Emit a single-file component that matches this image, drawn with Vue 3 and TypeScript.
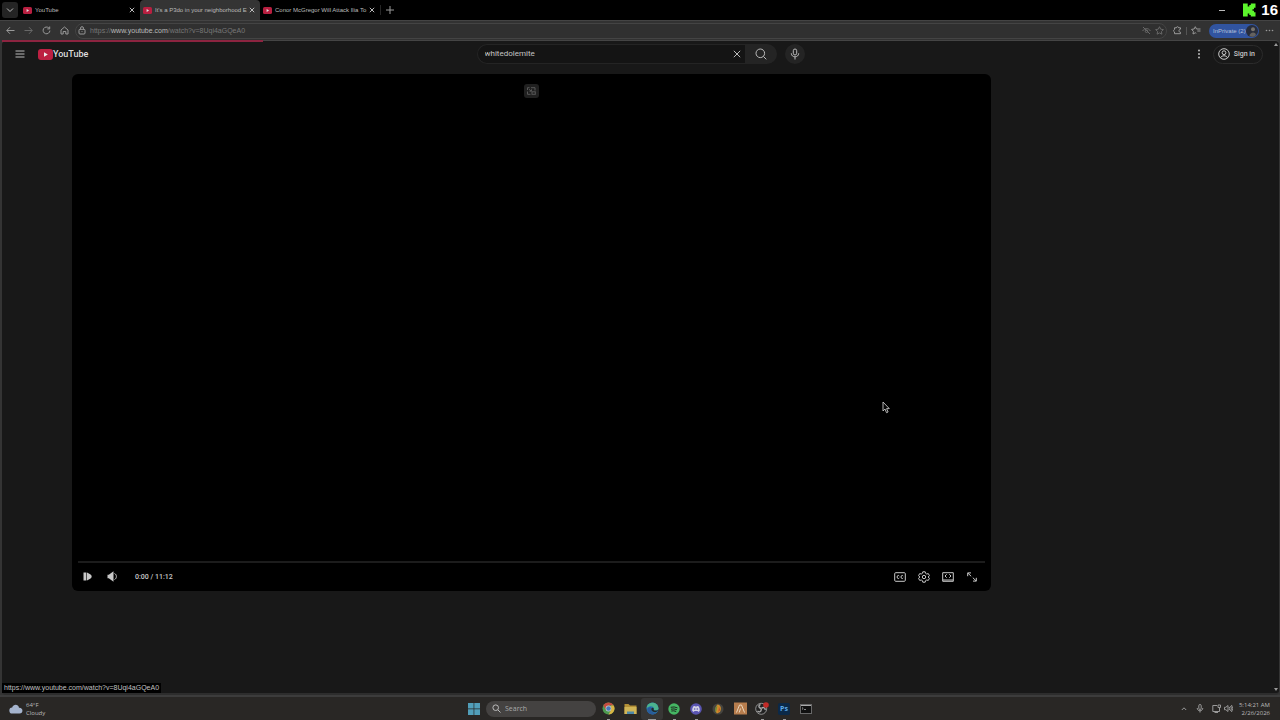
<script setup lang="ts">
import { ref } from 'vue'

interface Tab {
  id: number
  title: string
  active: boolean
}

const tabs: Tab[] = [
  { id: 1, title: 'YouTube', active: false },
  { id: 2, title: "It's a P3do in your neighborhood E", active: true },
  { id: 3, title: 'Conor McGregor Will Attack Ilia To', active: false },
]

const query = ref('whitedolemite')
const loaded = 20.4
</script>

<template>
  <div class="desktop">
    <header class="tabstrip">
      <button class="tab-menu" aria-label="Tab actions">
        <svg width="8" height="8" viewBox="0 0 8 8"><path d="M1 2.5 4 5.5 7 2.5" /></svg>
      </button>
      <div v-for="tab in tabs" :key="tab.id" class="tab" :class="{ active: tab.active }">
        <svg class="favicon" width="9" height="7" viewBox="0 0 9 7">
          <rect width="9" height="7" rx="1.6" fill="#b81f40" />
          <path d="M3.6 2v3L6.1 3.5z" fill="#ddd" />
        </svg>
        <span class="tab-title">{{ tab.title }}</span>
        <button class="close" aria-label="Close tab">
          <svg width="6" height="6" viewBox="0 0 6 6"><path d="M.8.8 5.2 5.2M5.2.8.8 5.2" /></svg>
        </button>
      </div>
      <button class="new-tab" aria-label="New tab">
        <svg width="8" height="8" viewBox="0 0 8 8"><path d="M4 0v8M0 4h8" /></svg>
      </button>
      <button class="minimize" aria-label="Minimize">
        <svg width="6" height="6" viewBox="0 0 6 6"><path d="M0 3.5h6" /></svg>
      </button>
      <div class="recorder">
        <svg width="14" height="14" viewBox="0 0 14 14">
          <path d="M1 .5h4.7v3h1.6V2h1.5V.5h4.7v4.2H12v1.5h-1.5v1.6H12v1.5h1.5v4.2H8.8V12H7.3v-1.5H5.7v3H1z" fill="#5cf52c" />
        </svg>
        <span>16</span>
      </div>
    </header>

    <nav class="toolbar">
      <button aria-label="Back"><svg width="9" height="9" viewBox="0 0 9 9"><path d="M8.5 4.5H.8M4 1.2.8 4.5 4 7.8" /></svg></button>
      <button class="dim" aria-label="Forward"><svg width="9" height="9" viewBox="0 0 9 9"><path d="M.5 4.5h7.7M5 1.2l3.2 3.3L5 7.8" /></svg></button>
      <button aria-label="Refresh"><svg width="9" height="9" viewBox="0 0 9 9"><path d="M7.9 4.6A3.4 3.4 0 1 1 6.9 2M7.7.5v2.4H5.3" /></svg></button>
      <button aria-label="Home"><svg width="9" height="9" viewBox="0 0 9 9"><path d="M1 4 4.5 1 8 4v4H5.8V5.5H3.2V8H1z" /></svg></button>
      <div class="address">
        <svg width="8" height="9" viewBox="0 0 8 9"><rect x="1" y="3.3" width="6" height="4.7" rx="1" /><path d="M2.5 3.3V2.2a1.5 1.5 0 0 1 3 0v1.1M4 5.2v.8" /></svg>
        <span class="url">https://<b>www.youtube.com</b>/watch?v=8Uqi4aGQeA0</span>
        <button class="dim" aria-label="Tracking prevention"><svg width="9" height="9" viewBox="0 0 9 9"><path d="M.6 5C2.4 1.7 6.6 1.7 8.4 5M1 1l7 7" /><circle cx="4.5" cy="5.2" r="1.3" /></svg></button>
        <button class="dim" aria-label="Add to favorites"><svg width="9" height="9" viewBox="0 0 9 9"><path d="m4.5.7 1.2 2.5 2.7.4-2 1.9.5 2.7-2.4-1.3-2.4 1.3.5-2.7-2-1.9 2.7-.4z" /></svg></button>
      </div>
      <button class="ext" aria-label="Extensions"><svg width="9" height="9" viewBox="0 0 9 9"><path d="M7.5 3V1.8H5.7C5.5.3 3.5.3 3.3 1.8H1.5v1.7C.3 4 .3 5.5 1.5 6v1.7h6V6.3C5.5 6.5 5.5 3 7.5 3.3" /></svg></button>
      <i class="bar"></i>
      <button class="fav" aria-label="Favorites"><svg width="10" height="9" viewBox="0 0 10 9"><path d="M6 3.2 5.5 3 4.3.7 3.1 3l-2.6.4 1.9 1.9L2 8l2.3-1.2 1 .5M6 3h3.5M6.3 5h3.2" /></svg></button>
      <button class="profile">
        <span>InPrivate (2)</span>
        <svg width="12" height="12" viewBox="0 0 12 12"><circle cx="6" cy="6" r="6" fill="#282d3b" /><circle cx="7" cy="4.2" r="2" fill="#77736d" /><path d="M3.5 11c0-4 6-5 6.5-1-1 1.7-4.5 2.5-6.5 1z" fill="#65625f" /></svg>
      </button>
      <button class="more" aria-label="Settings and more"><svg width="9" height="3" viewBox="0 0 9 3"><g class="solid"><circle cx="1.5" cy="1.5" r=".8" /><circle cx="4.5" cy="1.5" r=".8" /><circle cx="7.5" cy="1.5" r=".8" /></g></svg></button>
    </nav>

    <div class="window">
      <div class="progress" :style="{ width: loaded + '%' }"></div>
      <div class="masthead">
        <div class="start">
          <button class="guide" aria-label="Guide"><svg width="10" height="8" viewBox="0 0 10 8"><path d="M.5 1h9M.5 4h9M.5 7h9" /></svg></button>
          <a class="logo" href="#" aria-label="YouTube Home">
            <svg width="15" height="11" viewBox="0 0 15 11"><rect width="15" height="11" rx="3" fill="#bd2042" /><path d="M6 3.3v4.4L9.8 5.5z" fill="#eee" /></svg>
            <span>YouTube</span>
          </a>
        </div>
        <form class="search" role="search" @submit.prevent>
          <div class="field">
            <input v-model="query" type="text" aria-label="Search" />
            <button type="button" aria-label="Clear" @click="query = ''"><svg width="8" height="8" viewBox="0 0 8 8"><path d="M.8.8 7.2 7.2M7.2.8.8 7.2" /></svg></button>
          </div>
          <button class="go" aria-label="Submit search"><svg width="12" height="12" viewBox="0 0 12 12"><circle cx="5.3" cy="5.3" r="4.3" /><path d="m8.4 8.4 2.9 2.9" /></svg></button>
          <button class="mic" type="button" aria-label="Search with your voice"><svg width="10" height="12" viewBox="0 0 10 12"><rect x="3.3" y="1" width="3.4" height="6" rx="1.7" /><path d="M1.3 5.3c0 4.7 7.4 4.7 7.4 0M5 9v2.5" /></svg></button>
        </form>
        <div class="end">
          <button aria-label="Settings"><svg width="4" height="10" viewBox="0 0 4 10"><g class="solid"><circle cx="2" cy="1.5" r="1" /><circle cx="2" cy="5" r="1" /><circle cx="2" cy="8.5" r="1" /></g></svg></button>
          <a class="signin" href="#">
            <svg width="12" height="12" viewBox="0 0 12 12"><circle cx="6" cy="6" r="5.3" /><circle cx="6" cy="4.7" r="1.9" /><path d="M2.5 9.8c1-2.7 6-2.7 7 0" /></svg>
            <span>Sign in</span>
          </a>
        </div>
      </div>

      <main class="content">
        <section class="player" aria-label="Video player">
          <div class="badge">
            <svg width="9" height="8" viewBox="0 0 9 8"><path d="M.5 3V.7h2M4 .7h4v2.8M.5 4.5v2.8h3M2 2.2 4 4M4.5 2.3V4.2H2.5" /><rect x="5" y="4.8" width="3.3" height="2.5" /></svg>
          </div>
          <div class="controls">
            <div class="track"></div>
            <div class="row">
              <button class="play" aria-label="Play"><svg width="9" height="9" viewBox="0 0 9 9"><g class="solid"><path d="M.5.5h2.9v8H.5zM4 .5l3.2 1.7Q8.7 3 8.7 4.5T7.2 6.8L4 8.5z" /></g></svg></button>
              <button class="volume" aria-label="Mute"><svg width="11" height="11" viewBox="0 0 11 11"><path class="fill" d="M.5 3.7h1.3L6.5.3v10.4L1.8 7.3H.5z" /><path d="M7.5 2.5c2.5 1 2.5 5 0 6" /></svg></button>
              <span class="time">0:00 / 11:12</span>
              <div class="right">
                <button aria-label="Subtitles"><svg width="12" height="12" viewBox="0 0 12 12"><rect x=".7" y="1.7" width="10.6" height="8.6" rx="1" /><path d="M5.3 5c-.5-.9-2.2-.9-2.2 1s1.7 1.9 2.2 1M9.2 5C8.7 4.1 7 4.1 7 6s1.7 1.9 2.2 1" /></svg></button>
                <button aria-label="Settings"><svg width="12" height="12" viewBox="0 0 12 12"><path d="M4.8.8h2.4l.4 1.6 1.1.6 1.6-.4 1.1 2L10.2 6l1.2 1.4-1.1 2L8.7 9l-1.1.6-.4 1.6H4.8l-.4-1.6L3.3 9l-1.6.4-1.1-2L1.8 6 .6 4.6l1.1-2 1.6.4 1.1-.6z" /><circle cx="6" cy="6" r="1.7" /></svg></button>
                <button aria-label="Theater mode"><svg width="12" height="12" viewBox="0 0 12 12"><path d="M.7 1.7h10.6v8.6H.7zM.7 9h10.6M4.700 3.300 3 5l1.700 1.700M7.300 3.300 9 5 7.300 6.700" /></svg></button>
                <button aria-label="Full screen"><svg width="12" height="12" viewBox="0 0 12 12"><path d="M1.7 5.2V1.9H5M1.9 2.1l3.3 3.2M10.3 6.8v3.3H7M10.1 9.9 6.8 6.7" /></svg></button>
              </div>
            </div>
          </div>
        </section>
      </main>
      <div class="scrollbar"><i class="up"></i><i class="down"></i></div>
      <div class="status">https://www.youtube.com/watch?v=8Uqi4aGQeA0</div>
    </div>

    <footer class="taskbar">
      <button class="weather">
        <svg width="14" height="10" viewBox="0 0 14 10"><path d="M3.5 9.500a3 3 0 0 1-.3-6C4.200.2 9.200-.3 10 3.800c4.500-.3 4.500 5.700.5 5.700z" fill="#a5b4ce" /></svg>
        <span>64°F<br />Cloudy</span>
      </button>
      <div class="apps">
        <button aria-label="Start"><svg width="12" height="12" viewBox="0 0 12 12" class="art"><path d="M0 0h5.6v5.6H0zM6.3 0H12v5.6H6.3zM0 6.3h5.6V12H0zM6.3 6.3H12V12H6.3z" fill="#519eb9" /></svg></button>
        <label class="tasksearch">
          <svg width="9" height="9" viewBox="0 0 9 9"><circle cx="3.7" cy="3.7" r="2.8" /><path d="m5.8 5.8 2.7 2.7" /></svg>
          <input type="text" placeholder="Search" aria-label="Search the desktop" />
        </label>
        <button class="run" aria-label="Chrome"><svg class="art" width="13" height="13" viewBox="0 0 13 13"><circle cx="6.5" cy="6.5" r="6" fill="#4d9a50" /><path d="M1.3 3.5a6 6 0 0 1 10.4 0H6.5L4 8z" fill="#c44b40" /><path d="M11.7 3.5a6 6 0 0 1-5.2 9L9.1 8V3.5z" fill="#d9b443" /><circle cx="6.5" cy="6.5" r="2.9" fill="#c9cbc8" /><circle cx="6.5" cy="6.5" r="2.2" fill="#4777bd" /></svg></button>
        <button aria-label="File Explorer"><svg class="art" width="13" height="12" viewBox="0 0 13 12"><path d="M.5 1h4l1.5 1.5h6.5V11H.5z" fill="#b39036" /><path d="M.5 4h12v7H.5z" fill="#d0b557" /><path d="M3 11V8.5h7V11z" fill="#4d88a9" /></svg></button>
        <button class="run current" aria-label="Edge"><svg class="art" width="13" height="13" viewBox="0 0 13 13"><circle cx="6.5" cy="6.5" r="6" fill="#2878ad" /><path d="M.6 6C1.3-1 12-1.2 12.5 6.5c-.4 2-3 2.6-4.8 1.5C9.5 5 5 2.5.6 6z" fill="#4bb38e" /><path d="M5.2 5.7C3.7 8 6 11.5 10.5 10.7 7.5 14 1 12.5 1.3 7.5c.6-2 2.5-2.6 3.9-1.8z" fill="#295b9a" /><path d="M5.5 6.2c1.3-1 2.7 0 2.2 1.8 1.5 1 3.7.6 4.6-.5-.5 2-2.4 3-4.3 2.5-2-.5-3.3-2-2.5-3.8z" fill="#22292d" /></svg></button>
        <button class="run" aria-label="Spotify"><svg class="art" width="12" height="12" viewBox="0 0 12 12"><circle cx="6" cy="6" r="5.7" fill="#45b663" /><path d="M2.7 4.3q3.5-1 6.8.6M3 6.2q3-.8 5.9.5M3.3 8q2.6-.6 4.900.5" class="waves" /></svg></button>
        <button class="run" aria-label="Discord"><svg class="art" width="12" height="12" viewBox="0 0 12 12"><circle cx="6" cy="6" r="5.8" fill="#5a55b2" /><path d="M3.4 3.3 5 2.900l.3.500h1.400l.3-.5 1.600.4c1 1.500 1.300 3 1.100 4.700l-1.600.9-.5-.9H4.400l-.5.9-1.600-.9c-.2-1.700.1-3.200 1.100-4.700z" fill="#d3d2e5" /><circle cx="4.7" cy="6" r=".8" fill="#5a55b2" /><circle cx="7.3" cy="6" r=".8" fill="#5a55b2" /></svg></button>
        <button aria-label="FL Studio"><svg class="art" width="12" height="12" viewBox="0 0 12 12"><circle cx="6" cy="6" r="5.5" fill="#45443f" /><path d="M5.5 1.5C8.500 2 10 5 8 9l-3 1.500C2.500 8 3 4 5.500 1.500z" fill="#ce8b2b" /><path d="M5.5 2.500 4 9.500C2 7 3 4 5.500 2.500z" fill="#6a8a3e" /><path d="M7 3.500 8 7 6.500 9z" fill="#b84732" /></svg></button>
        <button aria-label="Audio editor"><svg class="art" width="13" height="13" viewBox="0 0 13 13"><path d="M0 .5h13v12H0z" fill="#b77d4d" /><path d="M2.5 10.5 5.500 3h2l3 7.500M5.200 10.500l1.300-4" stroke="#ead6bd" fill="none" /></svg></button>
        <button class="run" aria-label="OBS Studio"><svg class="art" width="14" height="13" viewBox="0 0 14 13"><circle cx="6.2" cy="6.8" r="5.5" fill="#222" stroke="#aaa" stroke-width=".8" /><path d="M6 6.5C3 5.5 3.5 3 5.5 2.5M6.3 6.5C8.5 4.5 10.5 6 10 8M6.2 7C6.5 10 4 10.5 2.5 9" stroke="#aaa" stroke-width="1.4" fill="none" /><circle cx="11" cy="3" r="2.8" fill="#c32b28" /></svg></button>
        <button class="run" aria-label="Photoshop"><span class="ps">Ps</span></button>
        <button aria-label="Terminal"><svg class="art" width="12" height="10" viewBox="0 0 12 10"><rect x=".5" y=".5" width="11" height="9" fill="#101010" stroke="#686868" /><path d="M1 1.5h10" stroke="#aaa" /><path d="m2 3.5 1.2 1L2 5.5M4 5.5h2" stroke="#bbb" stroke-width=".7" fill="none" /></svg></button>
      </div>
      <div class="tray">
        <button aria-label="Show hidden icons"><svg width="6" height="6" viewBox="0 0 6 6"><path d="m.8 4 2.2-2.2L5.2 4" /></svg></button>
        <button class="traymic" aria-label="Microphone"><svg width="8" height="9" viewBox="0 0 8 9"><rect x="2.8" y=".5" width="2.4" height="5" rx="1.2" /><path d="M1.2 4c0 3.7 5.6 3.7 5.6 0M4 6.8v1.7" /></svg></button>
        <button aria-label="Network"><svg width="9" height="9" viewBox="0 0 9 9"><path d="M5 1.5H.8v6h6.7V4M6 1h2.5v2.5H6zM2.5 8.5h3.5" /></svg></button>
        <button aria-label="Volume"><svg width="9" height="9" viewBox="0 0 9 9"><path d="M.5 3.3h1.3L4 1.5v6L1.8 5.7H.5zM5.2 3q1.2 1.5 0 3M6.5 2q2 2.5 0 5M7.5 1q2.5 3.5 0 7" /></svg></button>
        <div class="clock"><time>5:14:21 AM</time><time>2/26/2026</time></div>
      </div>
    </footer>

    <svg class="cursor" width="8" height="13" viewBox="0 0 8 13"><path d="M1 1v9l2-2 1.5 3.7 1.6-.7-1.5-3.4h2.7z" fill="#080808" stroke="#c4c4c4" stroke-width=".9" /></svg>
  </div>
</template>

<style>
html,
body {
  margin: 0;
  background: #000;
}
</style>

<style scoped>
* {
  box-sizing: border-box;
}
.desktop {
  position: relative;
  display: flex;
  flex-direction: column;
  height: 100vh;
  overflow: hidden;
  background: #343434;
  color: #bbb;
  font: 7px/10px "Open Sans", "Noto Sans", sans-serif;
}
button {
  display: flex;
  align-items: center;
  justify-content: center;
  flex: none;
  padding: 0;
  border: 0;
  background: none;
  color: inherit;
  font: inherit;
}
a {
  color: inherit;
  text-decoration: none;
}
svg {
  display: block;
  flex: none;
  fill: none;
  stroke: currentColor;
  stroke-width: 1;
}
.solid,
.fill {
  fill: currentColor;
  stroke: none;
}
.art,
.favicon,
.logo svg,
.profile svg,
.recorder svg,
.weather svg {
  stroke: none;
}
.waves {
  fill: none;
  stroke: #1b2a1f;
}

.tabstrip {
  display: flex;
  align-items: center;
  height: 20px;
  flex: none;
  padding-left: 2px;
  background: #000;
}
.tab-menu {
  width: 16px;
  height: 16px;
  border-radius: 3px;
  background: #242424;
}
.tab {
  display: flex;
  align-items: center;
  width: 120px;
  height: 20px;
  align-self: flex-end;
  padding: 0 5px 0 3px;
  gap: 3px;
  font: 6px/10px "Liberation Sans", sans-serif;
}
.tab-menu + .tab {
  margin-left: 2px;
}
.tab.active {
  border-radius: 4px 4px 0 0;
  background: #343434;
}
.tab-title {
  flex: 1;
  min-width: 0;
  white-space: nowrap;
}
.close {
  width: 6px;
}
.new-tab {
  width: 18px;
  height: 10px;
  border-left: 1px solid #262626;
  color: #999;
}
.minimize {
  margin-left: auto;
  margin-right: 17px;
}
.recorder {
  display: flex;
  align-items: center;
  gap: 5px;
  padding-right: 2px;
  color: #fff;
  font: bold 15px/18px "Liberation Sans", sans-serif;
}

.toolbar {
  display: flex;
  align-items: center;
  height: 20px;
  flex: none;
  padding: 0 6px 0 5px;
  gap: 8px;
  border-top: 1px solid #444;
  background: #323232;
  color: #999;
}
.toolbar > button:nth-child(-n + 4) {
  width: 10px;
}
.toolbar .dim {
  color: #686868;
}
.address {
  display: flex;
  align-items: center;
  flex: 1;
  height: 16px;
  margin: 0 -2px;
  padding: 0 2px;
  gap: 4px;
  border: 1px solid #444;
  border-radius: 8px;
  background: #303030;
}
.url {
  flex: 1;
  color: #777;
}
.url,
.status {
  font-family: "Liberation Sans", sans-serif;
}
.url b {
  color: #bbb;
  font-weight: 400;
}
.bar {
  width: 1px;
  height: 8px;
  margin: 0 -4px;
  background: #555;
}
.profile {
  justify-content: space-between;
  width: 50px;
  height: 14px;
  margin-right: -2px;
  padding: 0 1px 0 4px;
  border-radius: 7px;
  background: #3154a0;
  color: #b5c0d8;
  font: 6px/10px "Liberation Sans", sans-serif;
  white-space: nowrap;
}

.window {
  position: relative;
  display: flex;
  flex-direction: column;
  flex: 1;
  margin: 0 1px 0 2px;
  border-top: 1px solid #444;
  border-bottom: 2px solid #2d2d2d;
  border-radius: 4px;
  background: #181818;
}
.progress {
  position: absolute;
  top: -1px;
  left: 0;
  height: 2px;
  background: #8c2440;
}
.masthead {
  display: grid;
  grid-template-columns: 1fr 328px 1fr;
  align-items: center;
  height: 26px;
  padding: 0 13px;
}
.start,
.end,
.search,
.field,
.logo,
.signin {
  display: flex;
  align-items: center;
}
.start {
  gap: 13px;
}
.logo {
  color: #ddd;
  font: 500 9px/14px Roboto, sans-serif;
}
.field {
  flex: 1;
  min-width: 0;
  height: 20px;
  padding: 0 4px 0 7px;
  border: 1px solid #242424;
  border-right: 0;
  border-radius: 10px 0 0 10px;
  background: #141414;
}
input {
  flex: 1;
  min-width: 0;
  padding: 0;
  border: 0;
  outline: 0;
  background: none;
  color: #c4c4c4;
  font: 8px/12px Roboto, sans-serif;
}
.go {
  width: 32px;
  height: 20px;
  border-radius: 0 10px 10px 0;
  background: #242424;
}
.mic {
  width: 20px;
  height: 20px;
  margin-left: 8px;
  border-radius: 50%;
  background: #242424;
}
.end {
  justify-content: flex-end;
  gap: 12px;
  padding-right: 3px;
}
.signin {
  height: 19px;
  padding: 0 7px 0 4px;
  gap: 4px;
  border: 1px solid #2b2b2b;
  border-radius: 10px;
  color: #c8c8c8;
  font: 500 7px/10px Roboto, sans-serif;
}
.content {
  display: flex;
  flex: 1;
  align-items: flex-start;
  padding: 7px 288px 0 70px;
}
.player {
  display: flex;
  flex-direction: column;
  align-items: center;
  justify-content: space-between;
  flex: 1;
  aspect-ratio: 16 / 9;
  padding-top: 10px;
  border-radius: 6px;
  background: #000;
}
.badge {
  display: grid;
  place-items: center;
  width: 15px;
  height: 14px;
  border-radius: 3px;
  background: #202020;
  color: #585858;
}
.controls {
  width: 100%;
  padding: 0 6px;
}
.track {
  height: 2px;
  background: #1c1c1c;
}
.row {
  display: flex;
  align-items: center;
  height: 28px;
  padding: 0 7px 0 5px;
  color: #c8c8c8;
}
.volume {
  margin-left: 15px;
}
.time {
  margin-left: 17px;
  font: 500 7px/10px Roboto, sans-serif;
}
.right {
  display: flex;
  margin-left: auto;
  gap: 12px;
}
.scrollbar {
  position: absolute;
  top: 2px;
  right: 1px;
  bottom: 2px;
  display: flex;
  flex-direction: column;
  justify-content: space-between;
}
.up,
.down {
  border: 2px solid transparent;
}
.up {
  border-top: 0;
  border-bottom: 3px solid #999;
}
.down {
  border-bottom: 0;
  border-top: 3px solid #999;
}
.status {
  position: absolute;
  left: 0;
  bottom: 0;
  padding: 0 2px;
  background: #000;
  color: #c0c0c0;
}

.taskbar {
  display: grid;
  grid-template-columns: 1fr auto 1fr;
  align-items: center;
  flex: none;
  height: 25px;
  border-top: 2px solid #3c3c3c;
  background: #292725;
}
.weather {
  justify-self: start;
  padding-left: 9px;
  gap: 3px;
  font-size: 6px;
  line-height: 8px;
  text-align: left;
}
.apps {
  display: flex;
  align-items: center;
}
.apps > button {
  position: relative;
  width: 22px;
  height: 22px;
}
.apps .tasksearch {
  display: flex;
  align-items: center;
  width: 110px;
  height: 16px;
  margin: 0 1px;
  padding: 0 6px;
  gap: 4px;
  border-radius: 8px;
  background: #444241;
}
.tasksearch input {
  font-family: "Open Sans", "Noto Sans", sans-serif;
  font-size: 7px;
}
.tasksearch input::placeholder {
  color: #aaa;
  opacity: 1;
}
.apps .current {
  border-radius: 3px;
  background: #373635;
}
.run::after {
  content: "";
  position: absolute;
  bottom: 0;
  left: 50%;
  width: 3px;
  height: 1px;
  margin-left: -1px;
  background: #999;
}
.current::after {
  width: 8px;
  margin-left: -4px;
}
.ps {
  width: 12px;
  border-radius: 2px;
  background: #0b2948;
  color: #5dabea;
  font: bold 7px/12px "Open Sans", sans-serif;
}
.tray {
  display: flex;
  align-items: center;
  justify-content: flex-end;
  gap: 3px;
  padding-right: 10px;
  color: #999;
}
.traymic {
  margin: 0 5px 0 6px;
}
.clock {
  display: flex;
  flex-direction: column;
  align-items: flex-end;
  margin-left: 3px;
  color: #bbb;
  font-size: 6px;
  line-height: 8px;
}
.cursor {
  position: absolute;
  top: 401px;
  left: 882px;
}
</style>
